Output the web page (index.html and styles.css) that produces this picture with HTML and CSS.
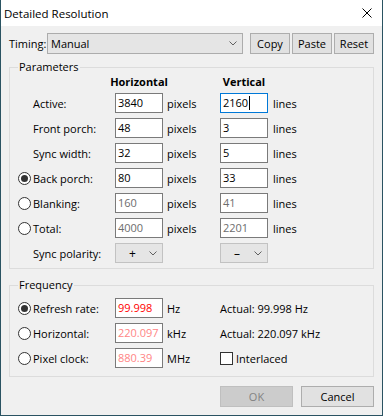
FILE: index.html
```
<!DOCTYPE html>
<html>
<head>
<meta charset="utf-8">
<link rel="stylesheet" href="styles.css">
</head>
<body>
<div class="window">
  <div class="titlebar">
    <span class="title">Detailed Resolution</span>
    <svg class="close" width="10" height="10" viewBox="0 0 10 10"><path d="M0.5 0.5 L9.5 9.5 M9.5 0.5 L0.5 9.5" stroke="#000" stroke-width="1" fill="none"/></svg>
  </div>
  <div class="content">
    <div class="timing-row">
      <span class="timing-label">Timing:</span>
      <div class="combo timing-combo"><span class="combo-text">Manual</span><svg class="chev" width="8" height="5" viewBox="0 0 8 5"><polyline points="0.5,0.5 4,4 7.5,0.5" stroke="#606060" fill="none"/></svg></div>
      <div class="btn-group">
        <div class="btn small">Copy</div>
        <div class="btn small">Paste</div>
        <div class="btn small">Reset</div>
      </div>
    </div>

    <fieldset class="group params">
      <legend>Parameters</legend>
      <div class="head-row">
        <span></span>
        <span class="head">Horizontal</span>
        <span></span>
        <span class="head">Vertical</span>
      </div>
      <div class="grid pgrid">
        <span class="lab plain">Active:</span>
        <div class="tb">3840</div>
        <span class="unit">pixels</span>
        <div class="tb focus">2160<span class="caret"></span></div>
        <span class="unit2">lines</span>

        <span class="lab plain">Front porch:</span>
        <div class="tb">48</div>
        <span class="unit">pixels</span>
        <div class="tb">3</div>
        <span class="unit2">lines</span>

        <span class="lab plain">Sync width:</span>
        <div class="tb">32</div>
        <span class="unit">pixels</span>
        <div class="tb">5</div>
        <span class="unit2">lines</span>

        <span class="lab"><span class="radio checked"></span>Back porch:</span>
        <div class="tb">80</div>
        <span class="unit">pixels</span>
        <div class="tb">33</div>
        <span class="unit2">lines</span>

        <span class="lab"><span class="radio"></span>Blanking:</span>
        <div class="tb dis">160</div>
        <span class="unit">pixels</span>
        <div class="tb dis">41</div>
        <span class="unit2">lines</span>

        <span class="lab"><span class="radio"></span>Total:</span>
        <div class="tb dis">4000</div>
        <span class="unit">pixels</span>
        <div class="tb dis">2201</div>
        <span class="unit2">lines</span>

        <span class="lab plain">Sync polarity:</span>
        <div class="combo pol"><span class="pol-text">+</span><svg class="chev" width="8" height="5" viewBox="0 0 8 5"><polyline points="0.5,0.5 4,4 7.5,0.5" stroke="#606060" fill="none"/></svg></div>
        <span></span>
        <div class="combo pol"><span class="pol-text">–</span><svg class="chev" width="8" height="5" viewBox="0 0 8 5"><polyline points="0.5,0.5 4,4 7.5,0.5" stroke="#606060" fill="none"/></svg></div>
        <span></span>
      </div>
    </fieldset>

    <fieldset class="group freq">
      <legend>Frequency</legend>
      <div class="grid fgrid">
        <span class="lab"><span class="radio checked"></span>Refresh rate:</span>
        <div class="tb red">99.998</div>
        <span class="unit">Hz</span>
        <span class="actual">Actual: 99.998 Hz</span>

        <span class="lab"><span class="radio"></span>Horizontal:</span>
        <div class="tb pink">220.097</div>
        <span class="unit">kHz</span>
        <span class="actual">Actual: 220.097 kHz</span>

        <span class="lab"><span class="radio"></span>Pixel clock:</span>
        <div class="tb pink">880.39</div>
        <span class="unit">MHz</span>
        <span class="actual"><span class="check"></span>Interlaced</span>
      </div>
    </fieldset>

    <div class="footer">
      <div class="btn wide disabled">OK</div>
      <div class="btn wide">Cancel</div>
    </div>
  </div>
</div>
</body>
</html>
```

FILE: styles.css
```
html, body {
  margin: 0;
  padding: 0;
  background: #f0f0f0;
}

body {
  font-family: "Open Sans", "Noto Sans", sans-serif;
  font-size: 11px;
  color: #000;
}

.window {
  width: 383px;
  height: 416px;
  box-sizing: border-box;
  border: 1px solid #2a5362;
  border-top: none;
  background: #f0f0f0;
  display: flex;
  flex-direction: column;
}

.titlebar {
  height: 26px;
  flex: none;
  background: #fff;
  display: flex;
  align-items: center;
  justify-content: space-between;
  padding: 0 10px 0 3px;
}

.title {
  font-size: 11.5px;
}

.close {
  display: block;
}

.content {
  padding: 7px 8px 0 8px;
}

.timing-row {
  display: flex;
  align-items: center;
  height: 21px;
  margin-bottom: 5px;
}

.timing-label {
  width: 38px;
  flex: none;
}

.combo {
  box-sizing: border-box;
  height: 21px;
  background: #e5e5e5;
  border: 1px solid #acacac;
  display: flex;
  align-items: center;
  justify-content: space-between;
  padding: 0 5px 0 3px;
}

.timing-combo {
  width: 196px;
  flex: none;
}

.chev {
  display: block;
}

.btn-group {
  display: flex;
  gap: 2px;
  margin-left: 7px;
}

.btn {
  box-sizing: border-box;
  height: 21px;
  background: #e1e1e1;
  border: 1px solid #adadad;
  display: flex;
  align-items: center;
  justify-content: center;
}

.btn.small {
  width: 40px;
}

.btn.wide {
  width: 73px;
}

.btn.disabled {
  background: #cccccc;
  border-color: #bfbfbf;
  color: #838383;
}

.group {
  margin: 0;
  border: 1px solid #dcdcdc;
  padding: 0 8px 5px 8px;
  min-width: 0;
}

.group legend {
  padding: 0 1px;
  line-height: 16px;
  height: 16px;
}

.freq {
  margin-top: 8px;
  padding-top: 5px;
  padding-bottom: 8px;
}

.head-row {
  display: grid;
  grid-template-columns: 97px 48px 57px 48px;
  height: 14px;
  line-height: 14px;
  margin-bottom: 4px;
}

.head {
  font-weight: bold;
  display: flex;
  justify-content: center;
  white-space: nowrap;
}

.grid {
  display: grid;
  grid-auto-rows: 20px;
  row-gap: 5px;
  align-items: center;
}

.pgrid {
  grid-template-columns: 97px 48px 57px 48px 1fr;
}

.fgrid {
  grid-template-columns: 97px 48px 57px 1fr;
}

.lab {
  display: flex;
  align-items: center;
  white-space: nowrap;
}

.lab.plain {
  padding-left: 15px;
}

.radio {
  box-sizing: border-box;
  width: 13px;
  height: 13px;
  border: 1px solid #333;
  border-radius: 50%;
  background: #fff;
  margin-right: 2px;
  display: inline-flex;
  align-items: center;
  justify-content: center;
  flex: none;
}

.radio.checked::after {
  content: "";
  width: 7px;
  height: 7px;
  border-radius: 50%;
  background: #333;
}

.check {
  box-sizing: border-box;
  width: 13px;
  height: 13px;
  border: 1px solid #333;
  background: #fff;
  margin-right: 3px;
  flex: none;
}

.tb {
  box-sizing: border-box;
  height: 20px;
  line-height: 18px;
  background: #fff;
  border: 1px solid #7a7a7a;
  padding-left: 2px;
  display: flex;
  align-items: center;
  white-space: nowrap;
}

.tb.focus {
  border-color: #0078d7;
}

.caret {
  width: 1px;
  height: 14px;
  background: #000;
  margin-left: 1px;
}

.tb.dis {
  color: #6d6d6d;
}

.tb.red {
  color: #ff0000;
}

.tb.pink {
  color: #ff8585;
}

.unit {
  padding-left: 4px;
}

.unit2 {
  padding-left: 5px;
}

.actual {
  display: flex;
  align-items: center;
  white-space: nowrap;
}

.combo.pol {
  height: 20px;
  border-color: #c2c2c2;
  padding: 0 5px 0 13px;
}

.pol-text {
  font-size: 12px;
}

.footer {
  display: flex;
  justify-content: flex-end;
  gap: 8px;
  margin-top: 9px;
}
```
